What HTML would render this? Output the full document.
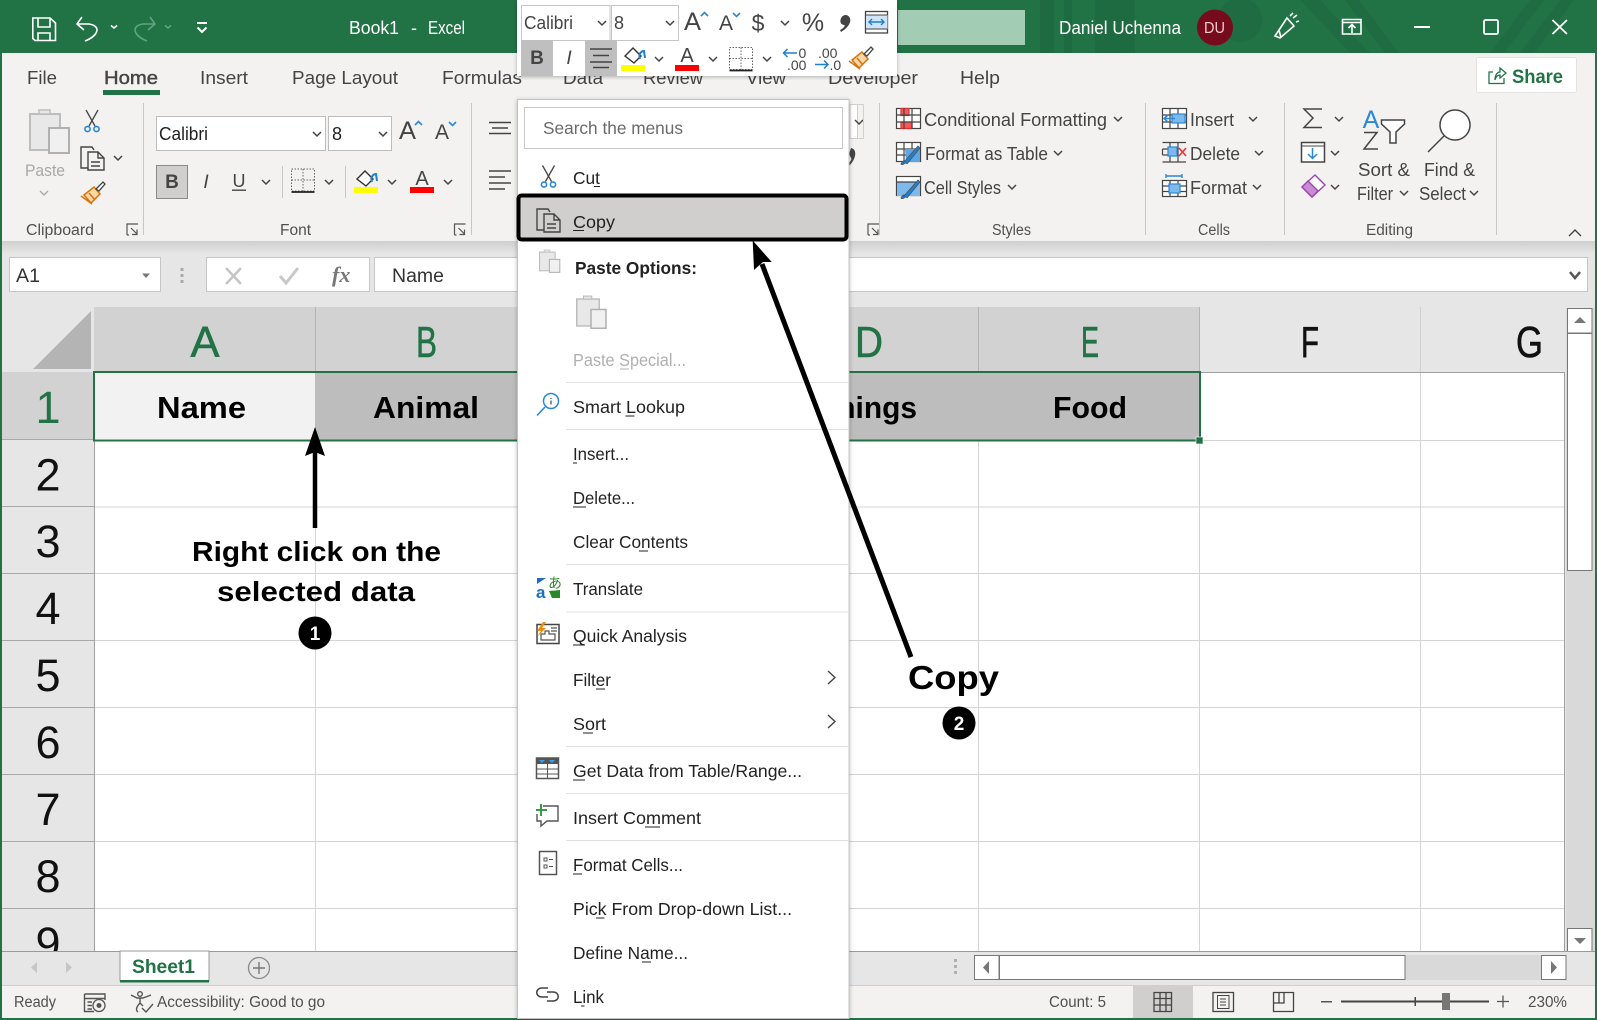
<!DOCTYPE html>
<html lang="en"><head><meta charset="utf-8"><title>Excel</title>
<style>
html,body{margin:0;padding:0;background:#fff;width:1597px;height:1020px;overflow:hidden}
svg{display:block}
text{font-family:"Liberation Sans",sans-serif;fill:#444;font-size:18px}
.m{fill:#222;font-size:17.5px}
.s{font-size:15.5px;fill:#505050}
.r{fill:#444;font-size:18px}
.h{font-size:44px;fill:#217346;stroke:#217346;stroke-width:.6px}
.k{fill:#111;stroke:#111}
.n{font-size:45px;fill:#111}
.c{font-size:31px;font-weight:bold;fill:#000}
.a{font-size:28px;font-weight:bold;fill:#000}
.ln{fill:none;stroke:#444;stroke-width:1.5}
.g{fill:none;stroke:#555;stroke-width:1.4}
</style></head><body>
<svg width="1597" height="1020" viewBox="0 0 1597 1020" xmlns="http://www.w3.org/2000/svg">
<defs>
<path id="cv" d="M-4,-2 L0,2 L4,-2" fill="none" stroke="#444" stroke-width="1.5"/>
<g id="sc" fill="none"><path d="M2,0 L11,16 M14,0 L5,16" stroke="#444" stroke-width="1.3"/><circle cx="3.5" cy="19" r="2.6" stroke="#2b88d8" stroke-width="1.6"/><circle cx="12.5" cy="19" r="2.6" stroke="#2b88d8" stroke-width="1.6"/></g>
<g id="cp" fill="none" stroke="#444" stroke-width="1.4"><path d="M8,22 H1 V1 H12 L14,4"/><path d="M8,6 H18 L24,12 V24 H8 Z M18,6 V12 H24 M11,16 H20 M11,20 H20"/></g>
<g id="br"><path d="M4,14 L14,6 L20,13 L11,22 Z" fill="#fbd6a6" stroke="#d9730d" stroke-width="1.5"/><path d="M1,15 L12,23 M9,12 L15,19" fill="none" stroke="#d9730d" stroke-width="1.5"/><path d="M16,8 L23,1 L25,3 L19,10 Z" fill="#fff" stroke="#444" stroke-width="1.3"/></g>
<g id="pst"><rect x="1" y="4" width="30" height="36" fill="#e8e8e8" stroke="#bdbdbd" stroke-width="2"/><path d="M10,4 V0 H21 V4 Z" fill="#e8e8e8" stroke="#bdbdbd" stroke-width="1.5"/><rect x="20" y="18" width="20" height="25" fill="#f0f0f0" stroke="#b0b0b0" stroke-width="2"/></g>
<g id="bd" fill="none"><path d="M0,0 H23 V22 H0 Z M11.5,0 V22 M0,11 H23" stroke="#666" stroke-width="1" stroke-dasharray="1.5 1.5"/><path d="M0,23 H23" stroke="#222" stroke-width="1.8"/></g>
<g id="fl"><path d="M2,9 L10,1 L18,9 L11,16 Z" fill="#fff" stroke="#333" stroke-width="1.4"/><path d="M17,12 C15,6 19,4 21,4 L22,11" fill="none" stroke="#1f7fd0" stroke-width="2"/></g>
<filter id="sh" x="-5%" y="-5%" width="110%" height="110%"><feDropShadow dx="0" dy="1" stdDeviation="2.2" flood-color="#000" flood-opacity=".28"/></filter>
<linearGradient id="gr" x1="0" y1="0" x2="0" y2="1"><stop offset="0" stop-color="#cfcfcf"/><stop offset="1" stop-color="#e6e6e6"/></linearGradient>
</defs>

<!-- window -->
<rect width="1597" height="1020" fill="#217346"/>
<g fill="#1f6a41" opacity=".8">
<rect x="1040" y="0" width="14" height="53"/><rect x="1064" y="0" width="8" height="53"/><rect x="1095" y="0" width="40" height="53"/>
<circle cx="1240" cy="20" r="22"/><path d="M1300,0 h20 l50,53 h-20 Z M1345,0 h14 l40,53 h-14 Z M1490,53 l40,-53 h14 l-40,53 Z M1520,53 l40,-53 h14 l-40,53 Z"/>
</g>
<rect x="898" y="10" width="127" height="35" fill="#a3ccb4"/>
<rect x="2" y="53" width="1593" height="188" fill="#f3f2f1"/>
<rect x="2" y="241" width="1593" height="131" fill="#e6e6e6"/>
<rect x="2" y="241" width="1593" height="13" fill="url(#gr)"/>

<!-- title bar -->
<g fill="none" stroke="#fff" stroke-width="1.6">
<path d="M32.8,18 H50 L55.5,23 V40.5 H35 L32.8,38.5 Z M38,18 V27 H50 V18 M38,40.5 V33 H50 V40.5"/>
<path d="M77,24 H89 C102,26 98,36 85,41 M82,17 L77,24 L84,30"/>
<path d="M111,25.5 L114,28 L117,25.5"/>
<g stroke="#5da581"><path d="M155,24 H143 C130,26 134,36 147,41 M150,17 L155,24 L148,30"/><path d="M165,25.5 L168,28 L171,25.5"/></g>
<path d="M197,23 H207 M197.5,27.5 L202,32 L206.5,27.5" stroke-width="2"/>
</g>
<text x="349" y="34" textLength="50" lengthAdjust="spacingAndGlyphs" style="fill:#fff">Book1</text>
<text x="411" y="34" style="fill:#fff">-</text>
<text x="428" y="34" textLength="37" lengthAdjust="spacingAndGlyphs" style="fill:#fff">Excel</text>
<text x="1059" y="34" textLength="122" lengthAdjust="spacingAndGlyphs" style="fill:#fff">Daniel Uchenna</text>
<circle cx="1215" cy="27.5" r="18" fill="#750b1c"/>
<text x="1204" y="33" textLength="21" lengthAdjust="spacingAndGlyphs" style="fill:#f4c8ce;font-size:16px">DU</text>
<g fill="none" stroke="#fff" stroke-width="1.6">
<path d="M1275,36 L1287,18 L1294,26 L1280,38 Z M1281,38 L1279,30 M1290,16 L1293,13 M1296,22 L1299,21 M1293,18 L1297,15"/>
<path d="M1342.5,19.500 H1361 V34 H1342.500 Z M1342.500,22.500 H1361 M1352,33 V25 M1348.500,28 L1352,24.500 L1355.500,28"/>
<path d="M1414,27 H1430" stroke-width="2"/>
<rect x="1484" y="20" width="14" height="14" rx="1.5" stroke-width="1.8"/>
<path d="M1552.5,20 L1567,34 M1567,20 L1552.5,34" stroke-width="1.8"/>
</g>

<!-- tabs -->
<text class="r" x="27" y="84" textLength="30" lengthAdjust="spacingAndGlyphs">File</text>
<text class="r" x="104" y="84" textLength="54" lengthAdjust="spacingAndGlyphs" style="stroke:#444;stroke-width:.45px">Home</text>
<rect x="103" y="90" width="57" height="5" fill="#217346"/>
<text class="r" x="200" y="84" textLength="48" lengthAdjust="spacingAndGlyphs">Insert</text>
<text class="r" x="292" y="84" textLength="106" lengthAdjust="spacingAndGlyphs">Page Layout</text>
<text class="r" x="442" y="84" textLength="80" lengthAdjust="spacingAndGlyphs">Formulas</text>
<text class="r" x="563" y="84" textLength="40" lengthAdjust="spacingAndGlyphs">Data</text>
<text class="r" x="643" y="84" textLength="60" lengthAdjust="spacingAndGlyphs">Review</text>
<text class="r" x="746" y="84" textLength="40" lengthAdjust="spacingAndGlyphs">View</text>
<text class="r" x="828" y="84" textLength="90" lengthAdjust="spacingAndGlyphs">Developer</text>
<text class="r" x="960" y="84" textLength="40" lengthAdjust="spacingAndGlyphs">Help</text>
<rect x="1476.5" y="57.5" width="100" height="35" rx="2" fill="#fff" stroke="#e3e3e3"/>
<path d="M1493,72 H1489 V83.500 H1504 V78 M1495,80 C1495,74 1498,72 1500,72 V68 L1506,73 L1500,78 V75 C1498,75 1496,76 1495,80" fill="none" stroke="#217346" stroke-width="1.300"/>
<text x="1512" y="83" textLength="51" lengthAdjust="spacingAndGlyphs" style="font-weight:bold;fill:#217346;font-size:19px">Share</text>

<!-- separators -->
<g fill="#c8c6c4"><rect x="143" y="103" width="1" height="132"/><rect x="471" y="103" width="1" height="132"/><rect x="879" y="103" width="1" height="132"/><rect x="1145" y="103" width="1" height="132"/><rect x="1284" y="103" width="1" height="132"/><rect x="1496" y="103" width="1" height="132"/></g>

<!-- clipboard -->
<use href="#pst" x="29" y="110"/>
<text x="25" y="176" textLength="40" lengthAdjust="spacingAndGlyphs" style="fill:#a8a8a8;font-size:17px">Paste</text>
<path d="M40,191 L44,195 L48,191" fill="none" stroke="#aaa" stroke-width="1.4"/>
<use href="#sc" x="84" y="110"/>
<use href="#cp" x="80" y="146"/>
<use href="#cv" x="118" y="158"/>
<use href="#br" x="80" y="181"/>
<text class="s" x="26" y="235" textLength="68" lengthAdjust="spacingAndGlyphs">Clipboard</text>
<g id="lc" fill="none" stroke="#555" stroke-width="1.2"><path d="M127,235 V224 H138 M131,228 L137,234 M137,229.5 V234.5 H132 M127,235 H129"/></g>

<!-- font -->
<rect x="156.5" y="116.5" width="169" height="34" fill="#fff" stroke="#bdbdbd"/>
<text x="159" y="140" textLength="49" lengthAdjust="spacingAndGlyphs" style="fill:#222">Calibri</text>
<use href="#cv" x="317" y="134"/>
<rect x="328.5" y="116.5" width="63" height="34" fill="#fff" stroke="#bdbdbd"/>
<text x="332" y="140" style="fill:#222">8</text>
<use href="#cv" x="383" y="134"/>
<text x="399" y="139" textLength="17" lengthAdjust="spacingAndGlyphs" style="font-size:25px">A</text>
<path d="M415,125 L418.5,121.5 L422,125" fill="none" stroke="#2b88d8" stroke-width="1.6"/>
<text x="435" y="139" textLength="14" lengthAdjust="spacingAndGlyphs" style="font-size:21px">A</text>
<path d="M449,122 L452.5,125.5 L456,122" fill="none" stroke="#2b88d8" stroke-width="1.6"/>
<rect x="156.5" y="165.5" width="31" height="33" fill="#d0cfcd" stroke="#8a8a8a"/>
<text x="172" y="188" text-anchor="middle" style="font-weight:bold;font-size:19px;fill:#444">B</text>
<text x="206" y="188" text-anchor="middle" style="font-style:italic;font-size:19px">I</text>
<text x="239" y="187" text-anchor="middle" style="font-size:18px">U</text>
<rect x="232" y="189.5" width="14" height="1.4" fill="#444"/>
<use href="#cv" x="266" y="182"/>
<rect x="282" y="166" width="1" height="32" fill="#c8c6c4"/>
<use href="#bd" x="291.5" y="169"/>
<use href="#cv" x="329" y="182"/>
<rect x="345" y="166" width="1" height="32" fill="#c8c6c4"/>
<use href="#fl" x="355" y="170"/>
<rect x="354" y="187" width="24" height="6" fill="#ff0"/>
<use href="#cv" x="392" y="182"/>
<text x="422" y="185" text-anchor="middle" style="font-size:20px;fill:#444">A</text>
<rect x="410" y="187" width="24" height="6" fill="#f00"/>
<use href="#cv" x="448" y="182"/>
<text class="s" x="280" y="235" textLength="31" lengthAdjust="spacingAndGlyphs">Font</text>
<use href="#lc" x="327.5"/>

<!-- alignment -->
<path d="M489,122.5 H511 M492,128 H508 M489,133.5 H511 M489,171 H511 M489,177 H505 M489,183 H511 M489,189 H505" class="ln"/>

<!-- number remnants -->
<rect x="800" y="104.5" width="57.500" height="34" fill="#fff" stroke="#d0d0d0"/>
<use href="#cv" x="859" y="122"/>
<rect x="850" y="104.500" width="13.500" height="34" fill="none" stroke="#d0d0d0"/>
<path d="M851,148 C857,149 857,158 849,166 L848,164 C851,161 852,159 851,158 L849,154 Z" fill="#444"/>
<use href="#lc" x="741"/>

<!-- styles -->
<g stroke="#444" stroke-width="1.2" fill="none">
<rect x="896.500" y="108.500" width="24" height="20" fill="#fff"/><rect x="901" y="108.500" width="8" height="7" fill="#f55" stroke="#d33"/><rect x="901" y="122" width="11" height="6.500" fill="#f55" stroke="#d33"/><path d="M896.500,115 H920 M896.500,122 H920 M904,108 V129 M912,108 V129"/>
<rect x="896.500" y="142.500" width="24" height="19" fill="#fff"/><path d="M896.500,149 H920 M896.500,155 H920 M904,142 V162 M912,142 V162"/><path d="M905,149 H920 V162 H906 Z" fill="#5ba6e6" stroke="none"/>
<rect x="896.500" y="176.500" width="24" height="19" fill="#fff"/><path d="M897,182 H920 V196 H897 Z" fill="#7db9ec" stroke="none"/><path d="M896.500,182 H920"/>
</g>
<path d="M903,163 L918,146 L920,148 L907,164 M901,164 C903,159 906,161 905,163 C904,165 901,165 901,164 Z M903,197 L918,180 L920,182 L907,198 M901,198 C903,193 906,195 905,197 C904,199 901,199 901,198 Z" fill="#1f7fd0" stroke="#555" stroke-width=".8"/>
<text class="r" x="924" y="126" textLength="183" lengthAdjust="spacingAndGlyphs">Conditional Formatting</text><use href="#cv" x="1118" y="119"/>
<text class="r" x="925" y="160" textLength="123" lengthAdjust="spacingAndGlyphs">Format as Table</text><use href="#cv" x="1058" y="153"/>
<text class="r" x="924" y="194" textLength="77" lengthAdjust="spacingAndGlyphs">Cell Styles</text><use href="#cv" x="1012" y="187"/>
<text class="s" x="992" y="235" textLength="39" lengthAdjust="spacingAndGlyphs">Styles</text>

<!-- cells -->
<g stroke="#444" stroke-width="1.2" fill="none">
<rect x="1162.500" y="108.500" width="24" height="20" fill="#fff"/><path d="M1162.500,115 H1186 M1162.500,122 H1186 M1170,108 V129 M1178,108 V129"/><rect x="1172" y="114" width="13" height="9" fill="#7db9ec" stroke="#2b88d8"/><path d="M1175,118.500 H1164 M1168,115 L1164,118.500 L1168,122" stroke="#2b88d8" stroke-width="1.5"/>
<path d="M1162.500,142.500 H1186 M1162.500,162 H1186 M1170,142 V162 M1178,142 V162 M1162.500,149 V155 M1162.500,149 H1178 M1162.500,155 H1178"/><rect x="1168" y="147" width="9" height="9" fill="#7db9ec" stroke="#2b88d8"/><path d="M1179,148 L1186,156 M1186,148 L1179,156" stroke="#e33" stroke-width="1.6"/>
<rect x="1162.500" y="180.500" width="24" height="16" fill="#fff"/><path d="M1162.500,186 H1186 M1162.500,191.500 H1186 M1170,180 V197 M1178,180 V197"/><rect x="1169" y="184" width="11" height="9" fill="#7db9ec" stroke="#2b88d8"/><path d="M1166,176 H1182 M1166,174 V178 M1182,174 V178" stroke="#2b88d8" stroke-width="1.4"/>
</g>
<text class="r" x="1190" y="126" textLength="44" lengthAdjust="spacingAndGlyphs">Insert</text><use href="#cv" x="1253" y="119"/>
<text class="r" x="1190" y="160" textLength="50" lengthAdjust="spacingAndGlyphs">Delete</text><use href="#cv" x="1259" y="153"/>
<text class="r" x="1190" y="194" textLength="57" lengthAdjust="spacingAndGlyphs">Format</text><use href="#cv" x="1257" y="187"/>
<text class="s" x="1198" y="235" textLength="32" lengthAdjust="spacingAndGlyphs">Cells</text>

<!-- editing -->
<path d="M1322,109 H1304 L1313,118 L1304,127.500 H1322" fill="none" stroke="#444" stroke-width="1.5"/><use href="#cv" x="1339" y="119"/>
<rect x="1301.500" y="142.500" width="23" height="19.500" fill="#fff" stroke="#444" stroke-width="1.500"/><path d="M1301,146 H1325" stroke="#444"/><path d="M1312.500,148 V158 M1308,154 L1312.500,158.500 L1317,154" fill="none" stroke="#2b88d8" stroke-width="1.500"/><use href="#cv" x="1335" y="153"/>
<path d="M1302,187 L1315,175 L1325,185 L1312,197 Z" fill="#fff" stroke="#a144b2" stroke-width="1.400"/><path d="M1302,187 L1308,181 L1318,191 L1312,197 Z" fill="#c98bd6" stroke="#a144b2" stroke-width="1.400"/><use href="#cv" x="1335" y="187"/>
<text x="1371" y="128" text-anchor="middle" style="font-size:25px;fill:#2b88d8">A</text>
<path d="M1364,132.500 H1377 L1364,149 H1378" fill="none" stroke="#444" stroke-width="1.500"/>
<path d="M1381.500,120 H1404.500 V124 L1396,132 V143 H1390 V132 L1381.500,124 Z" fill="#fff" stroke="#444" stroke-width="1.500"/>
<text class="r" x="1358" y="176" textLength="52" lengthAdjust="spacingAndGlyphs">Sort &amp;</text>
<text class="r" x="1357" y="200" textLength="36" lengthAdjust="spacingAndGlyphs">Filter</text><use href="#cv" x="1404" y="193"/>
<circle cx="1455" cy="125" r="15" fill="#fff" stroke="#444" stroke-width="1.500"/><path d="M1444,136 L1428,152" stroke="#444" stroke-width="1.500"/>
<text class="r" x="1424" y="176" textLength="51" lengthAdjust="spacingAndGlyphs">Find &amp;</text>
<text class="r" x="1419" y="200" textLength="47" lengthAdjust="spacingAndGlyphs">Select</text><use href="#cv" x="1474" y="193"/>
<text class="s" x="1366" y="235" textLength="47" lengthAdjust="spacingAndGlyphs">Editing</text>
<path d="M1569,236 L1575,230 L1581,236" fill="none" stroke="#444" stroke-width="1.400"/>

<!-- formula bar -->
<rect x="9.500" y="257.500" width="151" height="34" fill="#fff" stroke="#c6c6c6"/>
<text x="16" y="282" textLength="24" lengthAdjust="spacingAndGlyphs" style="font-size:19px;fill:#333">A1</text>
<path d="M142,273.500 H150 L146,278 Z" fill="#777"/>
<path d="M182,268 v3 M182,274 v3 M182,280 v3" stroke="#aaa" stroke-width="3"/>
<rect x="206.500" y="257.500" width="163" height="34" fill="#fff" stroke="#c6c6c6"/>
<path d="M226,268 L241,284 M241,268 L226,284" stroke="#c4c4c4" stroke-width="2.500"/>
<path d="M280,276 L286,283 L298,268" fill="none" stroke="#c8c8c8" stroke-width="3"/>
<text x="332" y="282" style="font-family:'Liberation Serif',serif;font-style:italic;font-weight:bold;font-size:22px;fill:#777">fx</text>
<rect x="374.500" y="257.500" width="1213" height="34" fill="#fff" stroke="#c6c6c6"/>
<text x="392" y="282" textLength="52" lengthAdjust="spacingAndGlyphs" style="font-size:19px;fill:#333">Name</text>
<path d="M1570,272 L1575,278 L1580,272" fill="none" stroke="#555" stroke-width="2.500"/>

<!-- grid -->
<rect x="94" y="372" width="1470" height="579" fill="#fff"/>
<rect x="1564" y="372" width="31" height="579" fill="#e6e6e6"/>
<g fill="#d4d4d4">
<rect x="315" y="372" width="1" height="579"/><rect x="536" y="372" width="1" height="579"/><rect x="757" y="372" width="1" height="579"/><rect x="978" y="372" width="1" height="579"/><rect x="1199" y="372" width="1" height="579"/><rect x="1420" y="372" width="1" height="579"/>
<rect x="94" y="440" width="1470" height="1"/><rect x="94" y="506.500" width="1470" height="1"/><rect x="94" y="573" width="1470" height="1"/><rect x="94" y="640" width="1470" height="1"/><rect x="94" y="707" width="1470" height="1"/><rect x="94" y="774" width="1470" height="1"/><rect x="94" y="841" width="1470" height="1"/><rect x="94" y="908" width="1470" height="1"/>
</g>
<rect x="94" y="372" width="1" height="579" fill="#a0a0a0"/>
<rect x="1564" y="372" width="1" height="579" fill="#a0a0a0"/>
<rect x="1199" y="372" width="366" height="1" fill="#a0a0a0"/>
<!-- col headers -->
<rect x="94" y="307" width="1105" height="65" fill="#d2d2d2"/>
<g fill="#b4b4b4"><rect x="315" y="307" width="1" height="65"/><rect x="536" y="307" width="1" height="65"/><rect x="757" y="307" width="1" height="65"/><rect x="978" y="307" width="1" height="65"/><rect x="1199" y="307" width="1" height="65"/><rect x="1420" y="307" width="1" height="65" fill="#cfcfcf"/></g>
<path d="M33,369 L91,369 L91,311 Z" fill="#b4b4b4"/>
<text class="h" x="190.500" y="357" textLength="29" lengthAdjust="spacingAndGlyphs">A</text>
<text class="h" x="416" y="357" textLength="21" lengthAdjust="spacingAndGlyphs">B</text>
<text class="h" x="855" y="357" textLength="28" lengthAdjust="spacingAndGlyphs">D</text>
<text class="h" x="1081" y="357" textLength="18" lengthAdjust="spacingAndGlyphs">E</text>
<text class="h k" x="1301" y="357" textLength="18" lengthAdjust="spacingAndGlyphs">F</text>
<text class="h k" x="1516" y="357" textLength="27" lengthAdjust="spacingAndGlyphs">G</text>
<!-- row headers -->
<rect x="2" y="372" width="92" height="579" fill="#e6e6e6"/>
<rect x="2" y="372" width="92" height="68" fill="#d2d2d2"/>
<g fill="#a8a8a8"><rect x="2" y="439" width="92" height="1"/><rect x="2" y="506" width="92" height="1"/><rect x="2" y="573" width="92" height="1"/><rect x="2" y="640" width="92" height="1"/><rect x="2" y="707" width="92" height="1"/><rect x="2" y="774" width="92" height="1"/><rect x="2" y="841" width="92" height="1"/><rect x="2" y="908" width="92" height="1"/></g>
<svg x="2" y="372" width="92" height="579" viewBox="2 372 92 579">
<text class="n" x="48" y="423" text-anchor="middle" style="fill:#217346">1</text>
<text class="n" x="48" y="490.500" text-anchor="middle">2</text>
<text class="n" x="48" y="557" text-anchor="middle">3</text>
<text class="n" x="48" y="624" text-anchor="middle">4</text>
<text class="n" x="48" y="691" text-anchor="middle">5</text>
<text class="n" x="48" y="758" text-anchor="middle">6</text>
<text class="n" x="48" y="825" text-anchor="middle">7</text>
<text class="n" x="48" y="892" text-anchor="middle">8</text>
<text class="n" x="48" y="959" text-anchor="middle">9</text>
</svg>
<!-- selection -->
<rect x="95" y="373" width="220" height="66" fill="#f2f2f2"/>
<rect x="315" y="373" width="884" height="67" fill="#bdbdbd"/>
<rect x="94" y="372" width="1106" height="68.500" fill="none" stroke="#217346" stroke-width="2"/>
<rect x="1196" y="437" width="7" height="7" fill="#217346" stroke="#fff" stroke-width=".6"/>
<text class="c" x="157" y="418" textLength="89" lengthAdjust="spacingAndGlyphs">Name</text>
<text class="c" x="373" y="418" textLength="106" lengthAdjust="spacingAndGlyphs">Animal</text>
<text class="c" x="819" y="418" textLength="98" lengthAdjust="spacingAndGlyphs">Things</text>
<text class="c" x="1053" y="418" textLength="74" lengthAdjust="spacingAndGlyphs">Food</text>

<!-- scrollbars -->
<rect x="1566" y="308" width="29" height="645" fill="#d9d9d9"/>
<rect x="1567.500" y="308.500" width="24.500" height="24.500" fill="#fff" stroke="#777"/>
<path d="M1574,323 H1586 L1580,317 Z" fill="#777"/>
<rect x="1567.500" y="333.500" width="24.500" height="237" fill="#fff" stroke="#777"/>
<rect x="1567.500" y="928.500" width="24.500" height="24.500" fill="#fff" stroke="#777"/>
<path d="M1574,938 H1586 L1580,944 Z" fill="#777"/>

<!-- sheet tabs -->
<rect x="2" y="951" width="1593" height="34" fill="#e6e6e6"/>
<rect x="2" y="951" width="1593" height="1" fill="#9a9a9a"/>
<rect x="120" y="951" width="89" height="30" fill="#fff" stroke="#9a9a9a"/>
<rect x="120" y="980" width="89" height="2.500" fill="#217346"/>
<text x="132" y="973" textLength="63" lengthAdjust="spacingAndGlyphs" style="font-weight:bold;font-size:19px;fill:#217346">Sheet1</text>
<path d="M37,962 L31,967.500 L37,973 Z M66,962 L72,967.500 L66,973 Z" fill="#c6c6c6"/>
<circle cx="259" cy="968" r="10.500" fill="none" stroke="#8a8a8a" stroke-width="1.300"/>
<path d="M253,968 H265 M259,962 V974" stroke="#777" stroke-width="1.400"/>
<path d="M955.500,971 v3 M955.500,965 v3 M955.500,959 v3" stroke="#b0b0b0" stroke-width="3"/>
<rect x="974" y="955" width="592" height="25" fill="#d9d9d9"/>
<rect x="974.500" y="955.500" width="24.500" height="24" fill="#fff" stroke="#777"/>
<path d="M989,961 L983,967.500 L989,974 Z" fill="#777"/>
<rect x="999.500" y="955.500" width="405.500" height="24" fill="#fff" stroke="#777"/>
<rect x="1541.500" y="955.500" width="24.500" height="24" fill="#fff" stroke="#777"/>
<path d="M1551,961 L1557,967.500 L1551,974 Z" fill="#777"/>

<!-- status -->
<rect x="2" y="985" width="1593" height="33" fill="#f3f2f1"/>
<rect x="2" y="985" width="1593" height="1" fill="#cfcfcf"/>
<text class="s" x="14" y="1007" textLength="42" lengthAdjust="spacingAndGlyphs">Ready</text>
<path d="M84.500,994 H105 V1000 M84.500,994 V1011.500 H94 M84.500,998.500 H105 M87.500,1002 H92 M87.500,1005.500 H92 M87.500,1009 H92" class="g"/>
<circle cx="99" cy="1005.500" r="6" fill="none" stroke="#555" stroke-width="1.300"/><circle cx="99" cy="1005.500" r="2.500" fill="#555"/>
<path d="M131,995 L137,998 H143 L151,995 M140,998 V1003 C137,1006 135,1010 138,1012 M140,1003 L143,1006" class="g"/><circle cx="140" cy="994" r="2.300" class="g"/><path d="M142,1008 L146,1012 L153,1004" class="g"/>
<text class="s" x="157" y="1007" textLength="168" lengthAdjust="spacingAndGlyphs">Accessibility: Good to go</text>
<text class="s" x="1049" y="1007" textLength="57" lengthAdjust="spacingAndGlyphs">Count: 5</text>
<rect x="1133" y="986" width="60" height="32" fill="#d0cfcd"/>
<path d="M1154,992.500 H1171.500 V1011.500 H1154 Z M1154,998.500 H1171.500 M1154,1005 H1171.500 M1160,992 V1012 M1166,992 V1012" fill="none" stroke="#444" stroke-width="1.300"/>
<rect x="1213" y="992.500" width="20.500" height="19" fill="none" stroke="#444" stroke-width="1.300"/><rect x="1217.500" y="995.500" width="11.500" height="13" fill="none" stroke="#444"/><path d="M1220,999 H1226 M1220,1002 H1226 M1220,1005 H1226" stroke="#444"/>
<path d="M1273.500,992.500 H1293.500 V1011.500 H1273.500 Z M1273.500,1003 H1284 V992 M1279,992 V1003" fill="none" stroke="#444" stroke-width="1.300"/>
<rect x="1321" y="1001" width="11" height="1.500" fill="#555"/>
<rect x="1341" y="1000.500" width="148" height="2" fill="#444"/>
<rect x="1414.500" y="997" width="1.500" height="9" fill="#444"/>
<rect x="1442" y="993" width="8" height="17" fill="#777"/>
<path d="M1497,1001.500 H1509 M1503,995.500 V1007.500" stroke="#555" stroke-width="1.300"/>
<text class="s" x="1528" y="1007" textLength="39" lengthAdjust="spacingAndGlyphs">230%</text>

<!-- annotation 1 -->
<path d="M315,528 V450" stroke="#000" stroke-width="4.500"/>
<path d="M315,427 L325,456 L315,452 L305,456 Z" fill="#000"/>
<text class="a" x="192" y="561" textLength="249" lengthAdjust="spacingAndGlyphs">Right click on the</text>
<text class="a" x="217" y="601" textLength="198" lengthAdjust="spacingAndGlyphs">selected data</text>
<circle cx="315" cy="633" r="16.500" fill="#000"/>
<text x="315" y="640" text-anchor="middle" style="font-weight:bold;font-size:19px;fill:#fff">1</text>

<!-- context menu -->
<rect x="517.500" y="99.500" width="331.500" height="919" fill="#fff" stroke="#c4c4c4" filter="url(#sh)"/>
<rect x="524.500" y="107.500" width="318" height="41" fill="#fff" stroke="#c8c8c8"/>
<text x="543" y="134" textLength="140" lengthAdjust="spacingAndGlyphs" style="font-size:17.5px;fill:#6a6a6a">Search the menus</text>
<use href="#sc" x="540.500" y="165.500"/>
<text class="m" x="573" y="184" textLength="27" lengthAdjust="spacingAndGlyphs">Cut</text><rect x="594" y="186" width="6" height="1" fill="#222"/>
<rect x="518.500" y="195.500" width="328" height="44" rx="3" fill="#d0cfcd" stroke="#000" stroke-width="4"/>
<use href="#cp" x="536" y="208"/>
<text class="m" x="573" y="228" textLength="42" lengthAdjust="spacingAndGlyphs">Copy</text><rect x="573" y="230" width="11" height="1" fill="#222"/>
<g transform="translate(539,250) scale(.52)"><use href="#pst"/></g>
<text class="m" x="575" y="274" textLength="122" lengthAdjust="spacingAndGlyphs" style="font-weight:bold">Paste Options:</text>
<g transform="translate(576,296) scale(.75)"><use href="#pst"/></g>
<text class="m" x="573" y="366" textLength="113" lengthAdjust="spacingAndGlyphs" style="fill:#b0b0b0">Paste Special...</text><rect x="620" y="368.500" width="9" height="1" fill="#b0b0b0"/>
<g fill="#e0e0e0"><rect x="566" y="382" width="282" height="1"/><rect x="566" y="429" width="282" height="1"/><rect x="566" y="564" width="282" height="1"/><rect x="566" y="611.500" width="282" height="1"/><rect x="566" y="746" width="282" height="1"/><rect x="566" y="793" width="282" height="1"/><rect x="566" y="840" width="282" height="1"/></g>
<circle cx="551" cy="401" r="7.500" fill="none" stroke="#2b88d8" stroke-width="1.500"/><path d="M545,407 L537,415.500" stroke="#2b88d8" stroke-width="1.600"/><path d="M551,398 v1 M551,400.500 v4" stroke="#444" stroke-width="1.200"/>
<text class="m" x="573" y="413" textLength="112" lengthAdjust="spacingAndGlyphs">Smart Lookup</text><rect x="625.500" y="415.500" width="9" height="1" fill="#222"/>
<text class="m" x="573" y="460" textLength="56" lengthAdjust="spacingAndGlyphs">Insert...</text><rect x="573" y="462.500" width="4" height="1" fill="#222"/>
<text class="m" x="573" y="504" textLength="62" lengthAdjust="spacingAndGlyphs">Delete...</text><rect x="573" y="506.500" width="13" height="1" fill="#222"/>
<text class="m" x="573" y="548" textLength="115" lengthAdjust="spacingAndGlyphs">Clear Contents</text><rect x="639" y="550.500" width="9" height="1" fill="#222"/>
<path d="M546,578 H537 V584 Z" fill="#1f6fc0"/>
<text x="536" y="598" style="font-size:17px;fill:#1f6fc0;font-weight:bold">a</text>
<text x="548" y="588" style='font-size:14px;fill:#2a8a2a;font-family:"Liberation Sans","Noto Sans CJK JP",sans-serif'>あ</text>
<path d="M549,591 L560,590 V598 H552 Z" fill="#2a8a2a"/>
<text class="m" x="573" y="595" textLength="70" lengthAdjust="spacingAndGlyphs">Translate</text>
<rect x="537" y="624.500" width="22" height="19" fill="#fff" stroke="#444" stroke-width="1.500"/><path d="M541,640 H555 V634 H549 V631 H545 V634 H541 Z M551,628 H557 M551,631 H557" fill="none" stroke="#555" stroke-width="1.200"/>
<path d="M543,622 L537,631 H541 L537,637 L546,628 H542 L546,622 Z" fill="#f08a0e"/>
<text class="m" x="573" y="642" textLength="114" lengthAdjust="spacingAndGlyphs">Quick Analysis</text><rect x="573" y="644.500" width="12" height="1" fill="#222"/>
<text class="m" x="573" y="686" textLength="38" lengthAdjust="spacingAndGlyphs">Filter</text><rect x="596" y="688.500" width="9" height="1" fill="#222"/>
<path d="M828,671 L835,677.500 L828,684" fill="none" stroke="#444" stroke-width="1.400"/>
<text class="m" x="573" y="730" textLength="33" lengthAdjust="spacingAndGlyphs">Sort</text><rect x="583" y="732.500" width="10" height="1" fill="#222"/>
<path d="M828,715 L835,721.500 L828,728" fill="none" stroke="#444" stroke-width="1.400"/>
<rect x="536.500" y="758" width="22" height="20.500" fill="#fff" stroke="#555" stroke-width="1.500"/><rect x="537" y="758" width="21.500" height="6" fill="#555"/><path d="M539,760 H545 L542,763 Z M549,760 H555 L552,763 Z" fill="#3aa0ee"/><path d="M537,769 H558 M537,774 H558 M547.500,764 V778" stroke="#555"/>
<text class="m" x="573" y="777" textLength="229" lengthAdjust="spacingAndGlyphs">Get Data from Table/Range...</text><rect x="573" y="779.500" width="12" height="1" fill="#222"/>
<path d="M543,806 H558 V821 H547 L541,826 V821 H537 V814" fill="#fff" stroke="#555" stroke-width="1.400"/><path d="M541,804 V816 M536,810 H547" stroke="#3a9a4a" stroke-width="2"/>
<text class="m" x="573" y="824" textLength="128" lengthAdjust="spacingAndGlyphs">Insert Comment</text><rect x="645" y="826.500" width="15" height="1" fill="#222"/>
<rect x="539.500" y="851.500" width="17" height="23" fill="#fff" stroke="#555" stroke-width="1.500"/><path d="M544,858 h3 v3 h-3 Z M544,865 h3 v3 h-3 Z M549,859.500 h4 M549,866.500 h4" fill="none" stroke="#555"/>
<text class="m" x="573" y="871" textLength="110" lengthAdjust="spacingAndGlyphs">Format Cells...</text><rect x="573" y="873.500" width="9" height="1" fill="#222"/>
<text class="m" x="573" y="915" textLength="219" lengthAdjust="spacingAndGlyphs">Pick From Drop-down List...</text><rect x="596" y="917.500" width="8.500" height="1" fill="#222"/>
<text class="m" x="573" y="959" textLength="115" lengthAdjust="spacingAndGlyphs">Define Name...</text><rect x="642" y="961.500" width="9" height="1" fill="#222"/>
<path d="M549,994 H543 C536,994 536,1003 543,1003 H549 M548,998 H554 C561,998 561,1007 554,1007 H548" fill="none" stroke="#444" stroke-width="1.500" transform="translate(-1,-6)"/>
<text class="m" x="573" y="1003" textLength="31" lengthAdjust="spacingAndGlyphs">Link</text><rect x="581" y="1005.500" width="3.500" height="1" fill="#222"/>

<!-- annotation 2 -->
<path d="M762,264 L911,657" stroke="#000" stroke-width="5"/>
<path d="M752.700,240.500 L771.700,262 L763,262 L754,270 Z" fill="#000"/>
<text x="908" y="689" textLength="91" lengthAdjust="spacingAndGlyphs" style="font-size:33px;font-weight:bold;fill:#000">Copy</text>
<circle cx="959" cy="723" r="16.500" fill="#000"/>
<text x="959" y="730" text-anchor="middle" style="font-weight:bold;font-size:19px;fill:#fff">2</text>

<!-- mini toolbar -->
<rect x="517" y="0" width="380" height="76" fill="#fff" filter="url(#sh)"/>
<rect x="521.500" y="5.500" width="88.500" height="35" fill="#fff" stroke="#c6c6c6"/>
<text x="524" y="29" textLength="49" lengthAdjust="spacingAndGlyphs" style="fill:#444">Calibri</text>
<use href="#cv" x="602" y="23"/>
<rect x="611.500" y="5.500" width="67" height="35" fill="#fff" stroke="#c6c6c6"/>
<text x="614" y="29" style="fill:#444">8</text>
<use href="#cv" x="670" y="23"/>
<text x="684" y="30" textLength="17" lengthAdjust="spacingAndGlyphs" style="font-size:25px">A</text>
<path d="M701,16 L704.500,12.500 L708,16" fill="none" stroke="#2b88d8" stroke-width="1.600"/>
<text x="719" y="30" textLength="14" lengthAdjust="spacingAndGlyphs" style="font-size:21px">A</text>
<path d="M733,13 L736.500,16.500 L740,13" fill="none" stroke="#2b88d8" stroke-width="1.600"/>
<text x="758" y="31" text-anchor="middle" style="font-size:23px">$</text>
<use href="#cv" x="785" y="23"/>
<text x="813" y="31" text-anchor="middle" style="font-size:25px">%</text>
<path d="M846,15 C852,16 853,25 841,32 L840,30 C844,28 845,26 844.500,25 C841,25 840,22 840.500,20 C841,17 843,15 846,15 Z" fill="#444"/>
<rect x="865.500" y="11.500" width="22" height="21.500" fill="#fff" stroke="#444" stroke-width="1.300"/><rect x="866" y="15" width="21.500" height="14" fill="#cfe4f7"/><path d="M866,15 H887 M866,29 H887" stroke="#444"/><path d="M869,22 H884 M872,19 L869,22 L872,25 M881,19 L884,22 L881,25" fill="none" stroke="#1f7fd0" stroke-width="1.400"/>
<rect x="521" y="40" width="32" height="36" fill="#bfbfbf"/>
<text x="537" y="64" text-anchor="middle" style="font-weight:bold;font-size:19px;fill:#444">B</text>
<text x="569" y="64" text-anchor="middle" style="font-style:italic;font-size:19px">I</text>
<rect x="585" y="40" width="32" height="36" fill="#bfbfbf"/>
<path d="M590,49 H612 M593,55.500 H609 M590,62 H612 M593,67.500 H609" class="ln"/>
<use href="#fl" x="623" y="47"/>
<rect x="621" y="65" width="24" height="6" fill="#ff0"/>
<use href="#cv" x="659" y="59"/>
<text x="687" y="62" text-anchor="middle" style="font-size:20px;fill:#444">A</text>
<rect x="675" y="65" width="24" height="6" fill="#f00"/>
<use href="#cv" x="713" y="59"/>
<use href="#bd" x="729.500" y="47.500"/>
<use href="#cv" x="767" y="59"/>
<path d="M783.500,53 H797 M787.500,49 L783.500,53 L787.500,57" fill="none" stroke="#1f7fd0" stroke-width="1.500"/>
<text x="798.500" y="58" style="font-size:14px">0</text><text x="787" y="70" style="font-size:14px">.00</text>
<text x="818" y="58" style="font-size:14px">.00</text>
<path d="M815,64.500 H828 M824,60.500 L828,64.500 L824,68.500" fill="none" stroke="#1f7fd0" stroke-width="1.500"/>
<text x="829.500" y="70" style="font-size:14px">.0</text>
<use href="#br" x="848" y="46"/>
</svg>
</body></html>
